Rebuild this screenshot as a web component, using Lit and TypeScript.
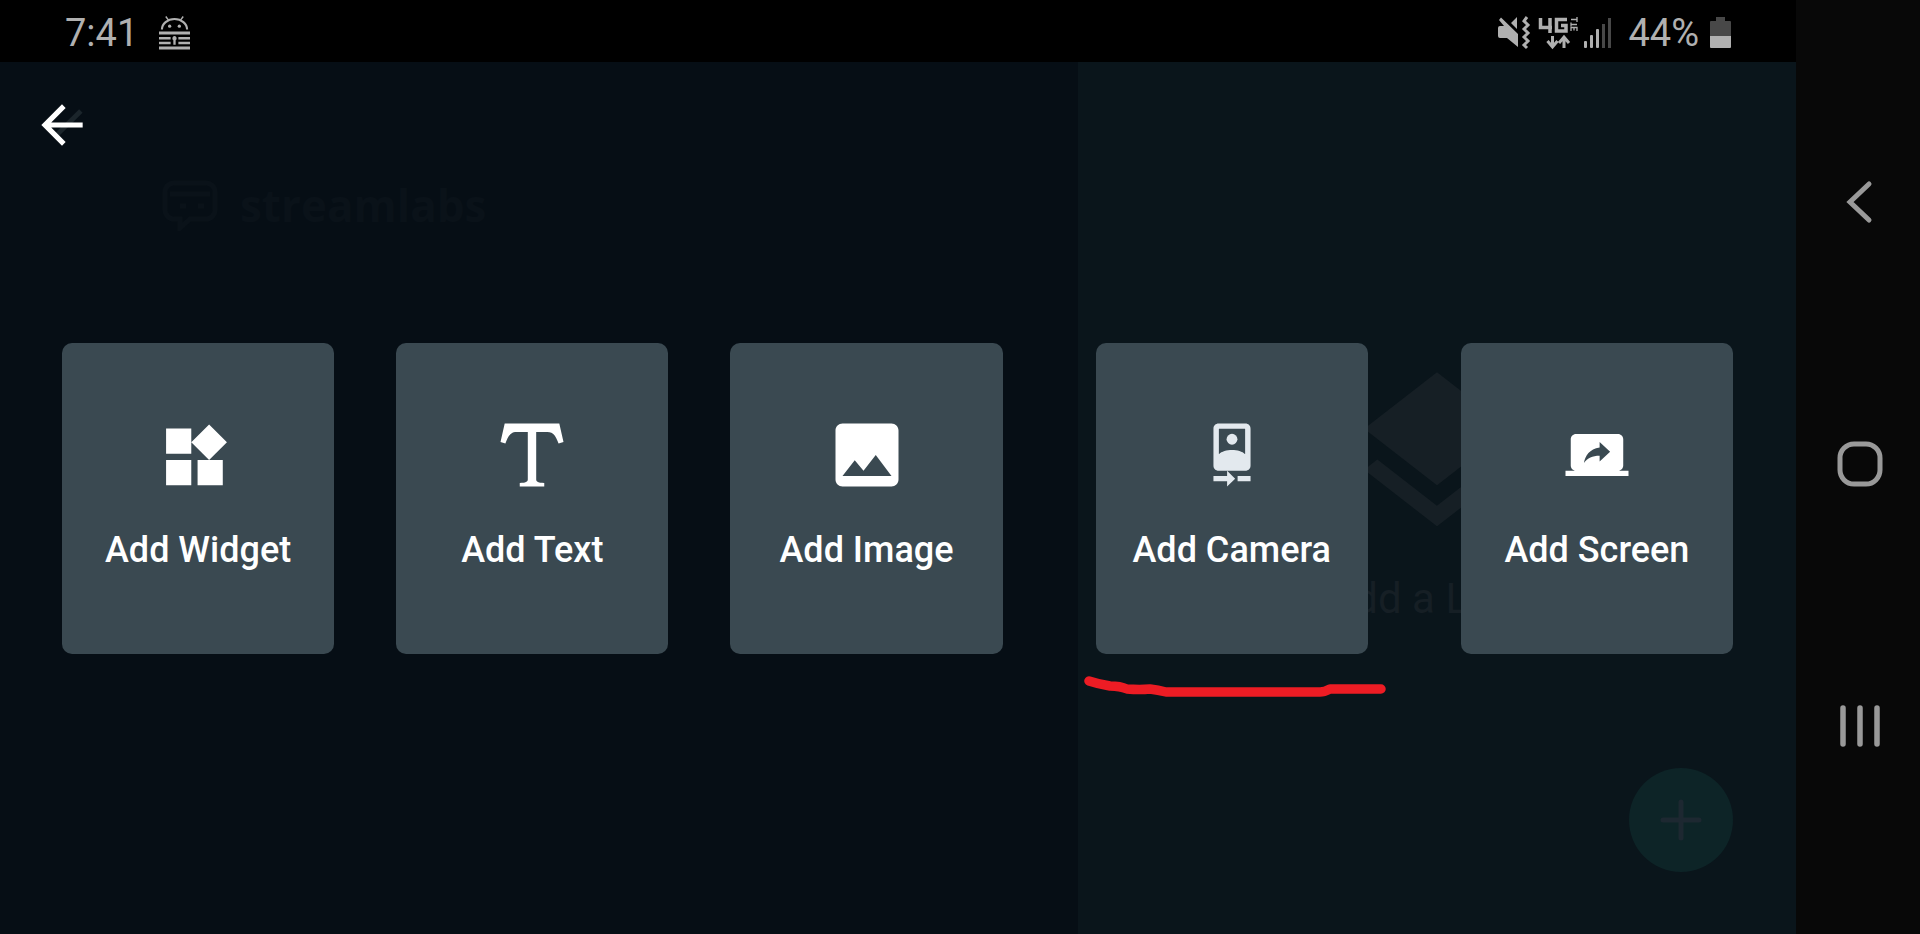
import { LitElement, html, svg, css } from "lit";
import { customElement } from "lit/decorators.js";

const sources = [
  {
    label: "Add Widget",
    side: "left",
    icon: svg`<path transform="translate(.18 1.75) scale(.9)" d="M13 13v8h8v-8h-8zM3 21h8v-8H3v8zM3 3v8h8V3H3zm13.660-1.310L11 7.340 16.660 13l5.660-5.660-5.660-5.650z"/>`,
  },
  {
    label: "Add Text",
    side: "left",
    icon: svg`<path d="M4.200 3H19.800L21 8.300L19.600 8.700C18.800 6.600 18.200 5.400 16.400 5.400H13.200V19C13.200 19.700 13.800 19.900 15.500 20V21H8.500V20C10.200 19.900 10.800 19.700 10.800 19V5.400H7.600C5.800 5.400 5.200 6.600 4.400 8.700L3 8.300z"/>`,
  },
  {
    label: "Add Image",
    side: "left",
    icon: svg`<path d="M21 19V5c0-1.100-.9-2-2-2H5c-1.100 0-2 .9-2 2v14c0 1.100.9 2 2 2h14c1.100 0 2-.9 2-2zM8.500 13.500l2.500 3.010L14.500 12l4.500 6H5l3.500-4.500z"/>`,
  },
  {
    label: "Add Camera",
    side: "right soft",
    icon: svg`<path d="M8.200 3H15.800C16.700 3 17.300 3.600 17.300 4.500V15C17.300 15.900 16.700 16.500 15.800 16.500H8.200C7.300 16.500 6.700 15.900 6.700 15V4.500C6.700 3.600 7.300 3 8.200 3zM8.250 4.500V11.800C9.800 10.200 14.200 10.200 15.750 11.800V4.500z" fill-rule="evenodd"/><circle cx="12" cy="7.500" r="1.550"/><path d="M6.700 18H10.600V16.500L12.900 18.750L10.600 21V19.500H6.700zM13.600 18H17.300V19.500H13.600z"/>`,
  },
  {
    label: "Add Screen",
    side: "right",
    icon: svg`<path d="M20 18c1.100 0 1.990-.9 1.990-2L22 6c0-1.110-.9-2-2-2H4c-1.110 0-2 .89-2 2v10c0 1.100.89 2 2 2H0v2h24v-2h-4zm-7-3.530v-2.190c-2.780 0-4.610.85-6 2.720.56-2.670 2.110-5.330 6-5.870V7l4 3.730-4 3.740z" transform="translate(3 3) scale(.75)"/>`,
  },
];

@customElement("app-root")
export class AppRoot extends LitElement {
  static styles = css`
    :host { display: block; font-family: Roboto, "Noto Sans", sans-serif; color: #fff; }
    * { box-sizing: border-box; }
    svg { display: block; }
    button { font: inherit; color: inherit; border: 0; padding: 0; background: none; cursor: pointer; }
    .device { display: flex; min-height: 100vh; background: #000; }
    .screen { flex: 1; display: flex; flex-direction: column; min-width: 0; }
    .status { display: flex; align-items: center; height: 62px; padding: 4px 64px 0 65px; color: #b0b0b0; font-size: 38px; line-height: 44px; }
    .time { margin-right: 21px; }
    .spacer { flex: 1; }
    .status-icons { margin-right: 16px; }
    .battery { margin-left: 11px; }
    .stage { position: relative; flex: 1; display: grid; grid-template: 1fr / 3fr 2fr; }
    .preview { background: #060e15; padding: 117px 160px; }
    .brand { display: flex; align-items: center; gap: 20px; color: #0a1219; font: 700 44px/52px "Open Sans", sans-serif; }
    .layers { background: #0a151b; color: #161f25; display: flex; flex-direction: column; align-items: center; justify-content: center; gap: 24px; padding-bottom: 16px; font-size: 42px; line-height: 50px; white-space: nowrap; }
    .fab { position: absolute; right: 63px; bottom: 62px; width: 104px; height: 104px; border-radius: 50%; background: #0d2427; color: #1d2831; display: grid; place-items: center; }
    .sheet { position: absolute; inset: 0; display: flex; align-items: center; padding: 1px 63px 0 62px; }
    .back { position: absolute; left: 31px; top: 32px; }
    .cards { flex: 1; display: flex; gap: 62px; }
    .card { flex: 1; display: flex; flex-direction: column; align-items: center; gap: 32px; padding: 70px 0 83px; border-radius: 10px; background: #3a4951; font-size: 36px; line-height: 42px; font-weight: 500; white-space: nowrap; }
    .right { margin-left: 31px; }
    .slot { position: relative; flex: 1; display: flex; }
    .soft svg { color: #e3e9ee; }
    .mark { position: absolute; left: -16px; top: 100%; pointer-events: none; }
    .nav { width: 124px; background: #080808; color: #999; display: flex; flex-direction: column; align-items: center; justify-content: space-around; padding: 71px 0 77px 4px; }
  `;

  render() {
    return html`
      <div class="device">
        <div class="screen">
          <header class="status">
            <span class="time">7:41</span>
            <svg width="31" height="34" viewBox="0 0 32 34" fill="currentColor" aria-hidden="true">
              <path d="M3 13.500a13 11 0 0 1 26 0" fill="none" stroke="currentColor" stroke-width="2.200"/>
              <path d="M7 0l3 4M25 0l-3 4" stroke="currentColor" stroke-width="1.500"/>
              <circle cx="11" cy="10" r="1.700"/><circle cx="21" cy="10" r="1.700"/>
              <path d="M0 15.500h32v3H0zM0 21h12v2.700H0zM20 21h12v2.700H20zM0 26h12v2.700H0zM20 26h12v2.700H20zM0 31h32v3H0z"/>
              <path d="M16 20a2.500 2.500 0 0 1 1.200 4.500v4.500h-2.400v-4.500A2.500 2.500 0 0 1 16 20z"/>
            </svg>
            <span class="spacer"></span>
            <svg class="status-icons" width="114" height="34" viewBox="0 0 114 34" fill="currentColor" aria-label="Muted, 4G LTE, signal">
              <path d="M0 12q0-2 2-2h4L1 4l2-2.500L20 18V31L9 22H2q-2 0-2-2zM13 7l6-6v12z"/>
              <path d="M29 1l-3 4 4 4-4 4 4 4-4 4 4 4-4 4 3 3" fill="none" stroke="currentColor" stroke-width="3"/>
              <path d="M42.500 2v9.500H54M52 2v15M69 3.500H58.500v11.500H68V9.500h-5" fill="none" stroke="currentColor" stroke-width="3.500"/>
              <path d="M73 4h6M79 1.500v5M73 9h6M73 7v4M73 15.500V12h6v3.500M76 12v3" transform="matrix(1 0 0 1 0 -.5)" fill="none" stroke="currentColor" stroke-width="1.300"/>
              <path d="M54.500 20v10M49.500 25l5 6 5-6M66 32V22M61 27l5-6 5 6" fill="none" stroke="currentColor" stroke-width="3"/>
              <rect x="86" y="25" width="3" height="7" rx="1"/><rect x="92" y="19" width="3" height="13" rx="1"/><rect x="98" y="13" width="3" height="19" rx="1"/>
              <path d="M104 8h3v24h-3zM110 2h3v30h-3z" fill="#484848"/>
            </svg>
            <span>44%</span>
            <svg class="battery" width="22" height="32" viewBox="0 0 22 32" aria-hidden="true">
              <path d="M6 0h9v4h5a1 1 0 0 1 1 1v14H0V5a1 1 0 0 1 1-1h5z" fill="#484848"/>
              <path d="M0 19h21v11a1 1 0 0 1-1 1H1a1 1 0 0 1-1-1z" fill="currentColor"/>
            </svg>
          </header>
          <main class="stage">
            <section class="preview">
              <div class="brand">
                <svg width="60" height="52" viewBox="0 0 60 52" fill="none" stroke="currentColor" stroke-width="5" aria-hidden="true">
                  <path d="M14 4h32a9 9 0 0 1 9 9v18a9 9 0 0 1-9 9H30l-10 9v-9h-6a9 9 0 0 1-9-9V13a9 9 0 0 1 9-9z"/>
                  <path d="M10 15h40M20 27h6M38 27h6"/>
                </svg>
                <span>streamlabs</span>
              </div>
            </section>
            <section class="layers">
              <svg width="194" height="194" viewBox="0 0 24 24" fill="currentColor" aria-hidden="true">
                <path d="M11.990 18.540l-7.370-5.730L3 14.070l9 7 9-7-1.630-1.270-7.380 5.740zM12 16l7.360-5.730L21 9l-9-7-9 7 1.630 1.270L12 16z"/>
              </svg>
              <span>Add a Layer</span>
            </section>
            <button class="fab" aria-label="Add">
              <svg width="42" height="42" viewBox="0 0 42 42" fill="none" stroke="currentColor" stroke-width="5" stroke-linecap="round" aria-hidden="true"><path d="M21 3v36M3 21h36"/></svg>
            </button>
            <div class="sheet">
              <button class="back" aria-label="Back">
                <svg width="62" height="62" viewBox="0 0 24 24" fill="currentColor" aria-hidden="true">
                  <path d="M19.300 6.600L9.800 16" stroke="#1b252b" stroke-width="1.900"/>
                  <path d="M20 11H7.830l5.590-5.590L12 4l-8 8 8 8 1.410-1.410L7.830 13H20v-2z"/>
                </svg>
              </button>
              <div class="cards">
                ${sources.map(
                  (s) => html`<div class="slot ${s.side}">
                    <button class="card">
                      <svg width="84" height="84" viewBox="0 0 24 24" fill="currentColor" aria-hidden="true">${s.icon}</svg>
                      <span>${s.label}</span>
                    </button>
                    ${s.label === "Add Camera"
                      ? html`<svg class="mark" width="310" height="48" viewBox="0 0 310 48" fill="none" stroke="#ed1c24" stroke-width="9.500" stroke-linecap="round" stroke-linejoin="round" aria-hidden="true">
                          <path d="M9 27Q18 30 30 32Q40 32 47 35Q60 36 70 35Q78 36 86 38H240Q244 38 250 35H301"/>
                        </svg>`
                      : ""}
                  </div>`
                )}
              </div>
            </div>
          </main>
        </div>
        <nav class="nav">
          <button aria-label="Back">
            <svg width="46" height="46" viewBox="0 0 46 46" fill="none" stroke="currentColor" stroke-width="5" stroke-linecap="round" aria-hidden="true"><path d="M32 5L13 23L32 41"/></svg>
          </button>
          <button aria-label="Home">
            <svg width="46" height="46" viewBox="0 0 46 46" fill="none" stroke="currentColor" stroke-width="5" aria-hidden="true"><rect x="3" y="3" width="40" height="40" rx="14"/></svg>
          </button>
          <button aria-label="Recent apps">
            <svg width="46" height="46" viewBox="0 0 46 46" fill="none" stroke="currentColor" stroke-width="5.500" stroke-linecap="round" aria-hidden="true"><path d="M6 5V41M23 5V41M40 5V41"/></svg>
          </button>
        </nav>
      </div>
    `;
  }
}
